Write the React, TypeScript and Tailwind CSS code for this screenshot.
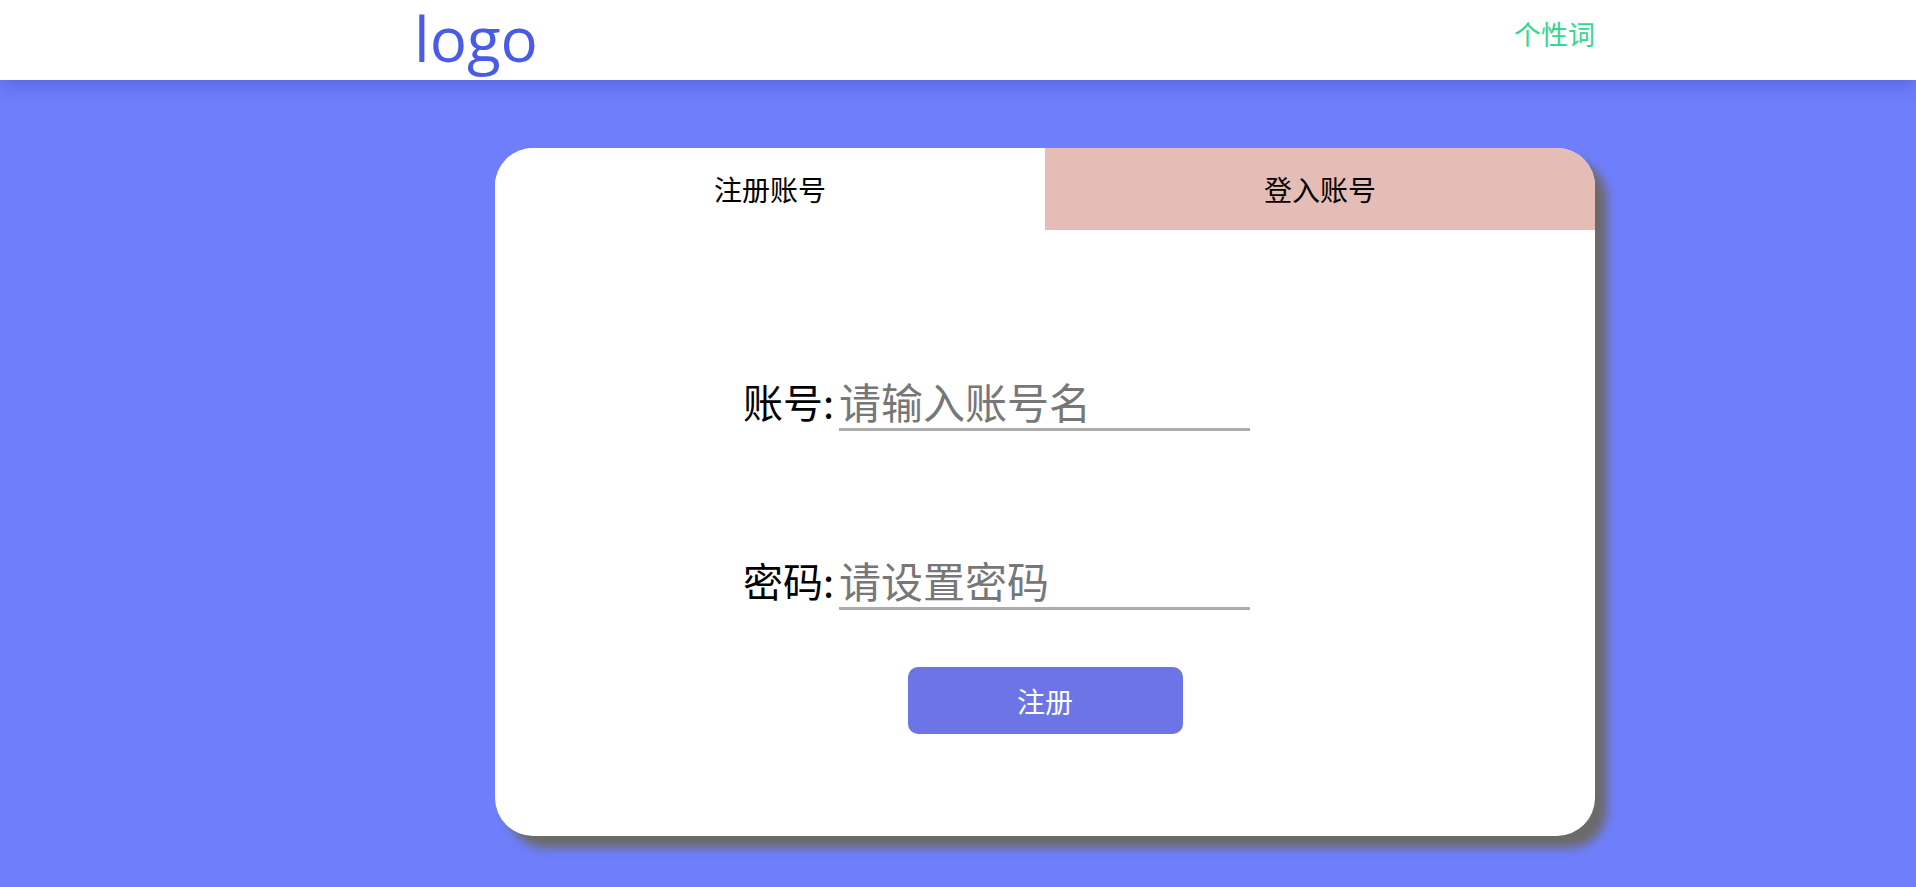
import { useState } from 'react';

const cjk = { fontFamily: '"Noto Sans CJK SC", "Noto Sans", sans-serif' };

export default function App() {
  const [tab, setTab] = useState<'register' | 'login'>('register');

  return (
    <div className="min-h-[887px] w-full bg-[#6f7efb] flex flex-col" style={cjk}>
      <header className="relative z-10 h-[80px] bg-white flex items-start justify-between pl-[414px] pr-[321px] shadow-[0_4px_20px_rgba(40,50,160,0.35)]">
        <div
          className="text-[62px] leading-[76px] pb-[4px] text-[#4a5be6]"
          style={{ fontFamily: '"Open Sans", "Noto Sans", sans-serif' }}
        >
          logo
        </div>
        <div className="text-[27px] leading-[68px] text-[#33d98e]">个性词</div>
      </header>

      <main className="flex pl-[495px] pt-[68px] pb-[51px]">
        <div className="w-[1100px] h-[688px] bg-white rounded-[38px] overflow-hidden shadow-[12px_12px_10px_#6b6b6b] flex flex-col">
          <div className="grid grid-cols-2 h-[82px]">
            <button
              onClick={() => setTab('register')}
              className={`flex items-center justify-center text-[28px] text-black ${tab === 'register' ? 'bg-white' : 'bg-[#e6bdb6]'}`}
            >
              注册账号
            </button>
            <button
              onClick={() => setTab('login')}
              className={`flex items-center justify-center text-[28px] text-black ${tab === 'login' ? 'bg-white' : 'bg-[#e6bdb6]'}`}
            >
              登入账号
            </button>
          </div>

          <form className="flex flex-col pt-[140px]" onSubmit={(e) => e.preventDefault()}>
            <label className="flex items-center pl-[248px]">
              <span className="w-[96px] text-[40px] leading-none text-black">账号:</span>
              <input
                className="w-[411px] h-[61px] border-b-[3px] border-[#acacac] outline-none text-[42px] text-black placeholder:text-[#777777] pt-[2px]"
                placeholder="请输入账号名"
              />
            </label>
            <label className="flex items-center pl-[248px] mt-[118px]">
              <span className="w-[96px] text-[40px] leading-none text-black">密码:</span>
              <input
                type="password"
                className="w-[411px] h-[61px] border-b-[3px] border-[#acacac] outline-none text-[42px] text-black placeholder:text-[#777777] pt-[2px]"
                placeholder="请设置密码"
              />
            </label>
            <div className="flex justify-center mt-[57px]">
              <button className="w-[275px] h-[67px] rounded-[10px] bg-[#6d75e6] text-white text-[28px]">
                {tab === 'register' ? '注册' : '登入'}
              </button>
            </div>
          </form>
        </div>
      </main>
    </div>
  );
}
